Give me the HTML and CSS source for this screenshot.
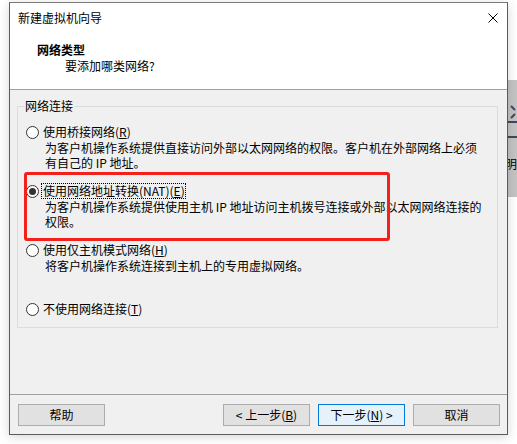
FILE: index.html
```html
<!DOCTYPE html>
<html lang="zh-CN">
<head>
<meta charset="utf-8">
<title>新建虚拟机向导</title>
<link rel="stylesheet" href="styles.css">
</head>
<body>
<div class="stage">
  <div class="window">
    <div class="top">
      <div class="titlebar">
        <span class="title">新建虚拟机向导</span>
        <svg class="close" width="10" height="10" viewBox="0 0 10 10"><path d="M0.5 0.5L9.5 9.5M9.5 0.5L0.5 9.5" stroke="#000" stroke-width="1" fill="none"/></svg>
      </div>
      <div class="header">
        <div class="h-title">网络类型</div>
        <div class="h-sub">要添加哪类网络?</div>
      </div>
    </div>
    <div class="body">
      <div class="group">
        <div class="legend">网络连接</div>
        <div class="options">
          <div class="opt">
            <div class="opt-row"><span class="radio"></span><span class="opt-label">使用桥接网络(<u>R</u>)</span></div>
            <div class="desc">为客户机操作系统提供直接访问外部以太网网络的权限。客户机在外部网络上必须<br>有自己的 IP 地址。</div>
          </div>
          <div class="opt">
            <div class="opt-row"><span class="radio on"></span><span class="opt-label focus">使用网络地址转换(NAT)(<u>E</u>)</span></div>
            <div class="desc">为客户机操作系统提供使用主机 IP 地址访问主机拨号连接或外部以太网网络连接的<br>权限。</div>
          </div>
          <div class="opt">
            <div class="opt-row"><span class="radio"></span><span class="opt-label">使用仅主机模式网络(<u>H</u>)</span></div>
            <div class="desc">将客户机操作系统连接到主机上的专用虚拟网络。</div>
          </div>
          <div class="opt">
            <div class="opt-row"><span class="radio"></span><span class="opt-label">不使用网络连接(<u>T</u>)</span></div>
          </div>
        </div>
      </div>
    </div>
    <div class="footer">
      <div class="btn">帮助</div>
      <div class="btns">
        <div class="btn">&lt; 上一步(<u>B</u>)</div>
        <div class="btn primary">下一步(<u>N</u>) &gt;</div>
        <div class="btn">取消</div>
      </div>
    </div>
    <div class="annot"></div>
  </div>
  <div class="side">
    <div class="side-top"></div>
    <div class="side-band">
      <svg class="side-icon" width="9" height="40" viewBox="0 0 9 40"><path d="M3 6L7 10M7 14L3 18" stroke="#3d4b5c" stroke-width="2" fill="none"/><rect x="0" y="21" width="9" height="2" fill="#3d4b5c"/><rect x="0" y="36" width="9" height="2" fill="#3d4b5c"/></svg>
      <div class="side-text"><span>明</span></div>
    </div>
  </div>
</div>
</body>
</html>
```

FILE: styles.css
```css
html, body {
  margin: 0;
  background: #ffffff;
}

body {
  font-family: "Noto Sans CJK SC", "Noto Sans", sans-serif;
  font-size: 12px;
  color: #000;
  overflow: hidden;
  width: 517px;
  height: 444px;
}

.stage {
  display: flex;
  align-items: flex-start;
  padding: 2px 0 0 9px;
  height: 444px;
  box-sizing: border-box;
}

.window {
  position: relative;
  flex: none;
  width: 499px;
  height: 433px;
  box-sizing: border-box;
  border: 1px solid #5b5b5b;
  border-top-color: #7a7a7a;
  background: #f0f0f0;
  display: flex;
  flex-direction: column;
  box-shadow: 0 2px 10px rgba(0, 0, 0, 0.16);
}

.top {
  background: #ffffff;
  height: 87px;
  box-sizing: border-box;
  border-bottom: 1px solid #a0a0a0;
  flex: none;
}

.titlebar {
  height: 29px;
  display: flex;
  align-items: center;
  justify-content: space-between;
  padding: 0 9px 0 8px;
  line-height: 16px;
}

.close {
  display: block;
}

.header {
  padding-top: 10px;
  line-height: 16px;
}

.h-title {
  font-weight: 700;
  padding-left: 27px;
}

.h-sub {
  padding-left: 55px;
}

.body {
  flex: 1;
  padding: 16px 9px 0 7px;
}

.group {
  border: 1px solid #dcdcdc;
  padding: 0 0 10px 8px;
}

.legend {
  width: fit-content;
  margin: -9px 0 0 -2px;
  padding: 0 1px;
  background: #f0f0f0;
  line-height: 16px;
}

.options {
  margin-top: 10px;
}

.opt {
  min-height: 59px;
}

.opt:last-child {
  min-height: 0;
}

.opt-row {
  display: flex;
  align-items: center;
  height: 16px;
  line-height: 16px;
}

.radio {
  flex: none;
  width: 13px;
  height: 13px;
  box-sizing: border-box;
  border: 1px solid #333;
  border-radius: 50%;
  background: #fff;
  margin-right: 4px;
  display: flex;
  align-items: center;
  justify-content: center;
}

.radio.on::after {
  content: "";
  width: 7px;
  height: 7px;
  border-radius: 50%;
  background: #333;
}

.opt-label.focus {
  display: block;
  line-height: 14px;
  outline: 1px dotted #000;
  margin-left: -1px;
  padding-left: 1px;
}

.desc {
  padding-left: 19px;
  line-height: 15px;
}

.footer {
  flex: none;
  height: 40px;
  box-sizing: border-box;
  border-top: 1px solid #a0a0a0;
  padding: 9px 7px 0 8px;
  display: flex;
  justify-content: space-between;
  align-items: flex-start;
}

.btns {
  display: flex;
  gap: 8px;
}

.btn {
  width: 87px;
  height: 22px;
  box-sizing: border-box;
  border: 1px solid #adadad;
  background: #e1e1e1;
  display: flex;
  align-items: center;
  justify-content: center;
  line-height: 16px;
}

.btn.primary {
  border-color: #0078d7;
  background: #e5f1fb;
}

.annot {
  position: absolute;
  left: 14px;
  top: 169px;
  width: 366px;
  height: 69px;
  box-sizing: border-box;
  border: 3px solid #f3201c;
  border-radius: 3px;
}

.side {
  flex: none;
  width: 9px;
  margin-top: -2px;
  display: flex;
  flex-direction: column;
}

.side-top {
  height: 80px;
}

.side-band {
  height: 117px;
  background: #c4c4c4;
  padding-top: 20px;
  box-sizing: border-box;
  overflow: hidden;
}

.side-icon {
  display: block;
}

.side-text {
  margin-top: 17px;
  overflow: hidden;
  width: 9px;
  line-height: 14px;
}

.side-text span {
  display: block;
  margin-left: -3px;
  white-space: nowrap;
}
```
